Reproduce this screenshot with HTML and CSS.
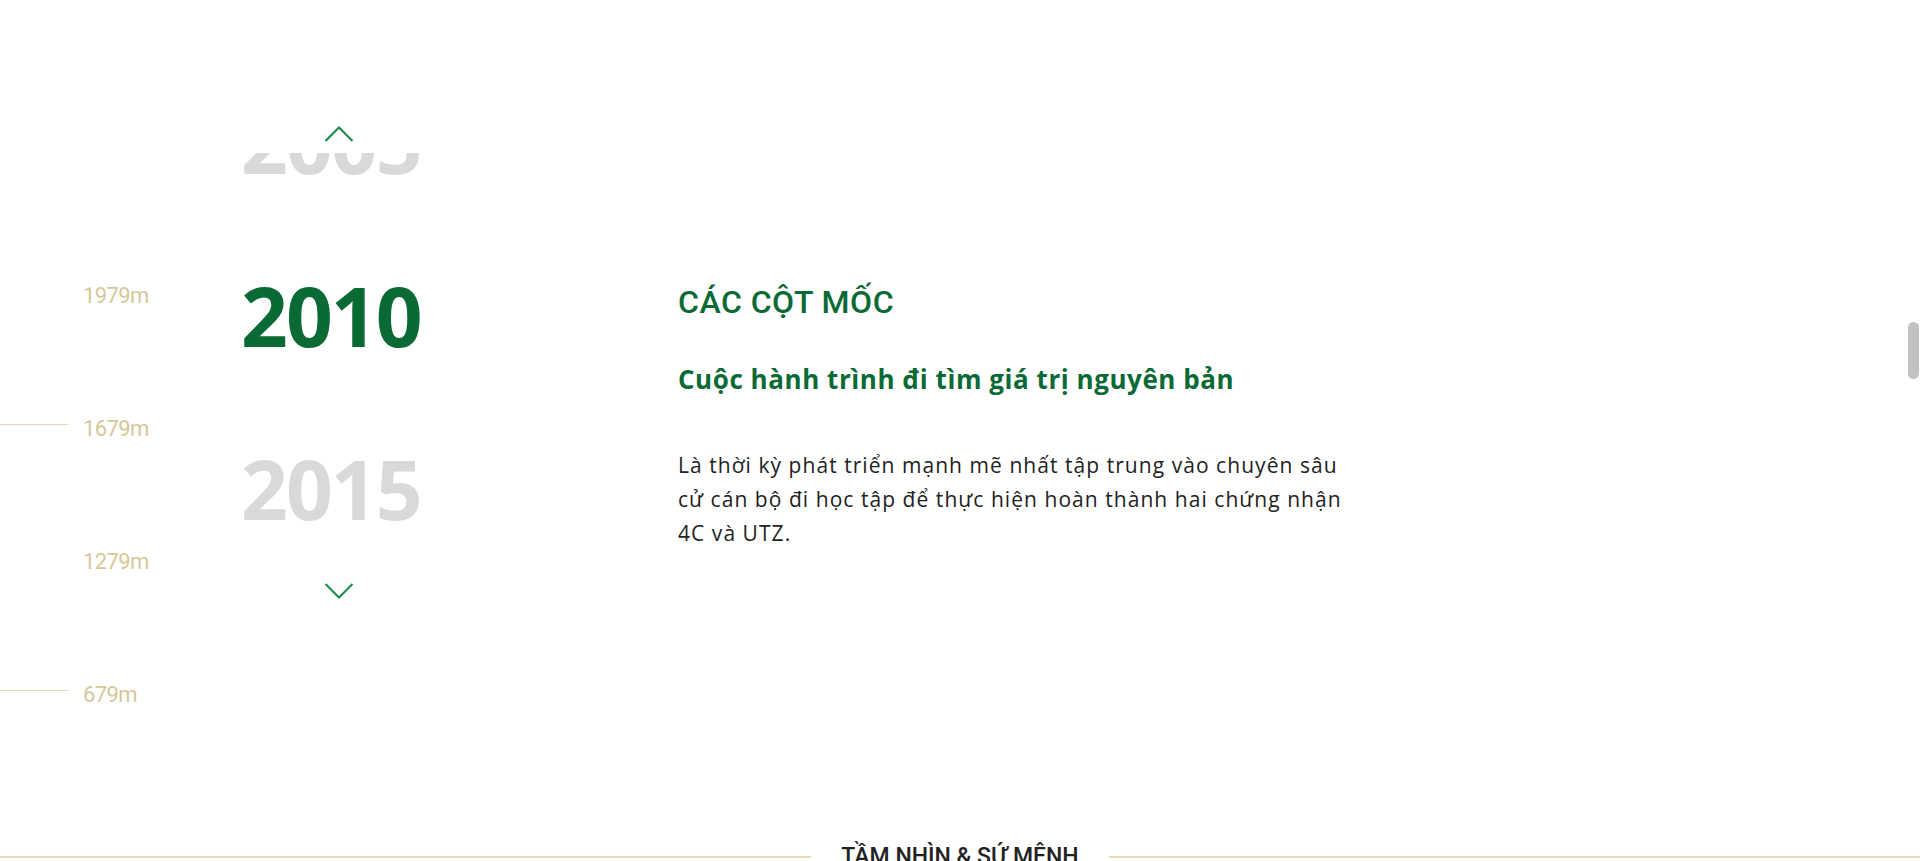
FILE: index.html
```html
<!DOCTYPE html>
<html lang="vi">
<head>
<meta charset="utf-8">
<title>Các cột mốc</title>
<link rel="stylesheet" href="styles.css">
</head>
<body>
<section class="milestones">
  <div class="altitudes">
    <div class="alt-row"><span class="alt-line alt-line--hidden"></span><span class="alt-label">1979m</span></div>
    <div class="alt-row"><span class="alt-line"></span><span class="alt-label">1679m</span></div>
    <div class="alt-row"><span class="alt-line alt-line--hidden"></span><span class="alt-label">1279m</span></div>
    <div class="alt-row"><span class="alt-line"></span><span class="alt-label">679m</span></div>
  </div>
  <div class="years">
    <button class="arrow" aria-label="Trước">
      <svg width="30" height="16" viewBox="0 0 30 16"><path d="M1.5 15 L15 1.5 L28.5 15" fill="none" stroke="#17864a" stroke-width="2"/></svg>
    </button>
    <div class="year-window">
      <ul class="year-list">
        <li class="year">2005</li>
        <li class="year year--active">2010</li>
        <li class="year">2015</li>
        <li class="year">2020</li>
      </ul>
    </div>
    <button class="arrow arrow--down" aria-label="Sau">
      <svg width="30" height="16" viewBox="0 0 30 16"><path d="M1.5 1 L15 14.5 L28.5 1" fill="none" stroke="#17864a" stroke-width="2"/></svg>
    </button>
  </div>
  <div class="content">
    <h2 class="content-title">CÁC CỘT MỐC</h2>
    <h3 class="content-subtitle">Cuộc hành trình đi tìm giá trị nguyên bản</h3>
    <p class="content-text">Là thời kỳ phát triển mạnh mẽ nhất tập trung vào chuyên sâu cử cán bộ đi học tập để thực hiện hoàn thành hai chứng nhận 4C và UTZ.</p>
  </div>
</section>
<section class="vision">
  <span class="vision-line"></span>
  <h2 class="vision-title">TẦM NHÌN &amp; SỨ MỆNH</h2>
  <span class="vision-line"></span>
</section>
<div class="scroll-thumb"></div>
</body>
</html>
```
FILE: styles.css
```css
* { box-sizing: border-box; }
html, body {
  margin: 0;
  padding: 0;
  background: #ffffff;
  height: 861px;
  overflow: hidden;
}
body {
  font-family: Roboto, "Noto Sans", sans-serif;
  color: #222222;
}

.milestones {
  display: flex;
  align-items: flex-start;
}

/* altitude column */
.altitudes {
  width: 241px;
  padding-top: 285px;
  display: flex;
  flex-direction: column;
}
.alt-row {
  height: 133px;
  display: flex;
  align-items: flex-start;
}
.alt-line {
  width: 68px;
  height: 1px;
  margin-top: 6px;
  margin-right: 15px;
  background: #e2d9b6;
}
.alt-line--hidden { background: transparent; }
.alt-label {
  font-size: 22px;
  line-height: 1;
  letter-spacing: -0.6px;
  color: #d5c89a;
}

/* years column */
.years {
  width: 196px;
  padding-top: 126px;
  display: flex;
  flex-direction: column;
  align-items: center;
}
.arrow {
  display: block;
  width: 30px;
  height: 16px;
  padding: 0;
  border: 0;
  background: none;
  cursor: pointer;
}
.arrow svg { display: block; }
.arrow--down { margin-top: 30px; }
.year-window {
  align-self: stretch;
  margin-top: 11px;
  height: 400px;
  overflow: hidden;
}
.year-list {
  list-style: none;
  margin: -52px 0 0 0;
  padding: 0;
}
.year {
  height: 173px;
  font-family: "Open Sans", "Noto Sans", sans-serif;
  font-weight: 700;
  font-size: 82px;
  line-height: 1;
  letter-spacing: -2px;
  color: #d9d9d9;
}
.year--active { color: #0a6a36; }

/* content column */
.content {
  margin-left: 241px;
  padding-top: 283px;
}
.content-title {
  margin: 0;
  font-size: 32px;
  font-weight: 500;
  line-height: 1.2;
  letter-spacing: 0.5px;
  color: #0a6a36;
}
.content-subtitle {
  margin: 43px 0 0 0;
  font-family: "Open Sans", "Noto Sans", sans-serif;
  font-size: 26px;
  font-weight: 700;
  line-height: 1.2;
  letter-spacing: 0.55px;
  color: #0a6a36;
}
.content-text {
  width: 685px;
  margin: 52px 0 0 0;
  font-family: "Open Sans", "Noto Sans", sans-serif;
  font-size: 21px;
  line-height: 34px;
  letter-spacing: 1.05px;
  color: #222222;
}

/* vision heading */
.vision {
  margin-top: 26px;
  display: flex;
  align-items: center;
}
.vision-line {
  flex: 1;
  height: 2px;
  background: #e2d9b6;
}
.vision-title {
  margin: 0;
  padding: 0 30px;
  font-size: 23px;
  font-weight: 500;
  line-height: 1.2;
  color: #222222;
}

.scroll-thumb {
  position: fixed;
  top: 322px;
  right: 1px;
  width: 11px;
  height: 57px;
  border-radius: 6px;
  background: #c1c1c1;
}
```
